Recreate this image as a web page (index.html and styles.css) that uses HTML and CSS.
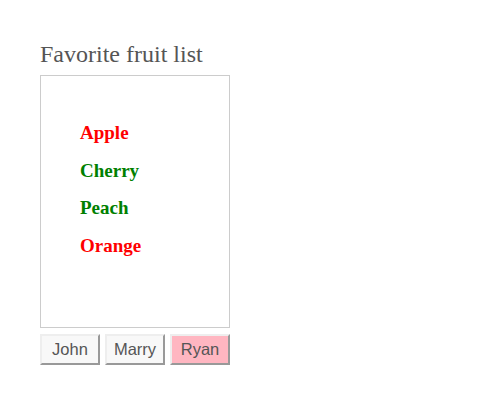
FILE: index.html
```html
<!DOCTYPE html>
<html>
<head>
<meta charset="utf-8">
<link rel="stylesheet" href="styles.css">
</head>
<body>
<div class="app">
  <h2 class="title">Favorite fruit list</h2>
  <div class="box">
    <ul class="fruits">
      <li class="red">Apple</li>
      <li class="green">Cherry</li>
      <li class="green">Peach</li>
      <li class="red">Orange</li>
    </ul>
  </div>
  <div class="buttons">
    <button class="btn">John</button>
    <button class="btn">Marry</button>
    <button class="btn active">Ryan</button>
  </div>
</div>
</body>
</html>
```
FILE: styles.css
```css
html, body {
  margin: 0;
  background: #fff;
}
.app {
  padding: 40px 0 0 40px;
  font-family: "Liberation Serif", serif;
}
.title {
  margin: 0 0 7px;
  font-size: 24px;
  font-weight: normal;
  color: #555;
  line-height: 28px;
}
.box {
  width: 188px;
  height: 251px;
  border: 1px solid #ccc;
}
.fruits {
  list-style: none;
  margin: 0;
  padding: 38px 0 0 39px;
}
.fruits li {
  font-size: 19px;
  font-weight: bold;
  line-height: 37.7px;
}
.red { color: #ff0000; }
.green { color: #008000; }
.buttons {
  display: flex;
  gap: 5px;
  margin-top: 6px;
}
.btn {
  width: 60px;
  height: 31px;
  padding: 0;
  font-family: "Liberation Sans", Arial, sans-serif;
  font-size: 16.5px;
  color: #555;
  background: #f8f8f8;
  border: 2px solid;
  border-color: #eee #999 #999 #eee;
}
.btn.active {
  background: #ffb6c1;
}
```
